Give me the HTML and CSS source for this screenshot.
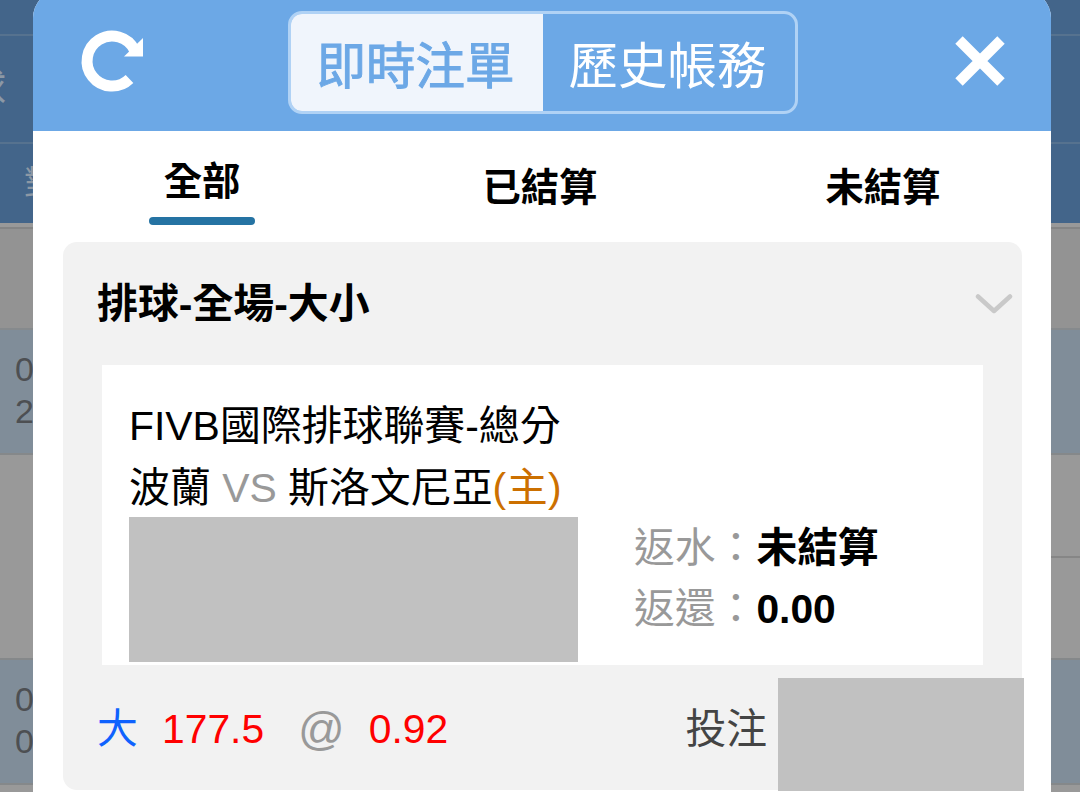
FILE: index.html
```
<!DOCTYPE html>
<html lang="zh-Hant">
<head>
  <meta charset="UTF-8">
  <title>即時注單</title>
  <link rel="stylesheet" href="styles.css">
</head>
<body>
<div class="page">
  <div class="row head head-top"></div>
  <div class="row head head-main"><span class="sport">球</span></div>
  <div class="row head head-sub"><span class="match">對</span></div>
  <div class="row strip"></div>
  <div class="row first"></div>
  <div class="row blue"><span class="score">0<br>2</span></div>
  <div class="row gray"><div class="split"></div></div>
  <div class="row blue"><span class="score">0<br>0</span></div>
  <div class="row gray"></div>
</div>

<div class="modal">
  <div class="modal-header">
    <svg class="icon-refresh" viewBox="0 0 62 62">
      <path d="M47.500 49 A25 25 0 1 1 52.500 20" fill="none" stroke="#fff" stroke-width="11"/>
      <path d="M61 8 V26.500 H42 Z" fill="#fff"/>
    </svg>
    <div class="switch">
      <div class="switch-item on">即時注單</div>
      <div class="switch-item">歷史帳務</div>
    </div>
    <svg class="icon-close" viewBox="0 0 50 50">
      <path d="M4 4 L46 46 M46 4 L4 46" stroke="#fff" stroke-width="10.500"/>
    </svg>
  </div>

  <div class="tabs">
    <div class="tab active"><span>全部</span></div>
    <div class="tab">已結算</div>
    <div class="tab">未結算</div>
  </div>

  <div class="card">
    <div class="card-title">
      <span>排球-全場-大小</span>
      <svg class="icon-arrow" viewBox="0 0 38 22">
        <path d="M3 3.500 L19 18 L35 3.500" fill="none" stroke="#c9c9c9" stroke-width="4.500" stroke-linecap="round" stroke-linejoin="round"/>
      </svg>
    </div>
    <div class="bet">
      <div class="line">FIVB國際排球聯賽-總分</div>
      <div class="line">波蘭 <span class="vs">VS</span> 斯洛文尼亞<span class="home">(主)</span></div>
      <div class="bet-info">
        <div class="mask"></div>
        <div class="result">
          <div><span class="label">返水：</span><b>未結算</b></div>
          <div><span class="label">返還：</span><b>0.00</b></div>
        </div>
      </div>
    </div>
    <div class="card-footer">
      <span class="pick">大</span>
      <span class="num">177.5</span>
      <span class="at">@</span>
      <span class="num">0.92</span>
      <span class="stake">投注</span>
      <div class="mask mask-stake"></div>
    </div>
  </div>
</div>
</body>
</html>
```

FILE: styles.css
```
* {
  box-sizing: border-box;
}
body {
  margin: 0;
  height: 792px;
  overflow: hidden;
  font-family: "Liberation Sans", "Noto Sans CJK TC", sans-serif;
  color: #000;
}

/* dimmed page behind */
.page {
  height: 792px;
  overflow: hidden;
  background: #999;
}
.row {
  overflow: hidden;
  color: #4d4f52;
}
.head {
  background: #43658a;
  color: #8c98a5;
}
.head-top {
  height: 36px;
  border-bottom: 2px solid #56728f;
}
.head-main {
  height: 108px;
  border-bottom: 2px solid #56728f;
}
.head-sub {
  height: 79px;
}
.sport {
  display: block;
  margin: 29px 0 0 -34px;
  font-size: 40px;
  line-height: 46px;
}
.match {
  display: block;
  margin: 16px 0 0 24px;
  font-size: 34px;
  line-height: 46px;
}
.strip {
  height: 6px;
  background: #999;
  border-bottom: 2px solid #858585;
}
.first {
  height: 101px;
  background: #939393;
  border-bottom: 2px solid #868a8d;
}
.blue {
  height: 125px;
  padding-top: 18px;
  background: #808d99;
  border-bottom: 2px solid #85888a;
}
.gray {
  height: 205px;
  border-bottom: 2px solid #85888a;
}
.split {
  width: 60px;
  height: 103px;
  margin-left: auto;
  border-bottom: 2px solid #868686;
}
.score {
  display: block;
  margin-left: 15px;
  font-size: 34px;
  line-height: 42px;
}

/* modal */
.modal {
  position: absolute;
  top: -10px;
  left: 33px;
  width: 1018px;
  height: 802px;
  overflow: hidden;
  background: #fff;
  border-radius: 28px 28px 0 0;
}
.modal-header {
  display: flex;
  align-items: flex-start;
  height: 141px;
  padding-top: 21px;
  background: #6ca8e6;
}
.icon-refresh {
  width: 62px;
  height: 62px;
  margin: 19px 0 0 49px;
  overflow: visible;
}
.switch {
  display: flex;
  width: 510px;
  height: 103px;
  margin-left: 144px;
  border: 3px solid #b0d2f5;
  border-radius: 14px;
  overflow: hidden;
}
.switch-item {
  width: 252px;
  padding-right: 3px;
  font-size: 49.500px;
  line-height: 105px;
  text-align: center;
  color: #fff;
}
.switch-item.on {
  background: #f0f5fc;
  color: #6ca8e6;
  -webkit-text-stroke: 1px #6ca8e6;
}
.icon-close {
  width: 50px;
  height: 50px;
  margin: 25px 0 0 157px;
}
.tabs {
  display: flex;
  height: 111px;
}
.tab {
  width: 338px;
  padding-top: 29px;
  font-size: 38.300px;
  line-height: 56px;
  text-align: center;
  font-weight: bold;
}
.tab:last-child {
  width: 342px;
  padding-left: 6px;
}
.tab.active {
  padding-top: 23px;
}
.tab.active span {
  display: block;
  width: 106px;
  margin: 0 auto;
}
.tab.active span::after {
  content: "";
  display: block;
  height: 8px;
  margin-top: 7px;
  border-radius: 4px;
  background: #2573a3;
}
.card {
  width: 959px;
  height: 548px;
  margin-left: 30px;
  background: #f2f2f2;
  border-radius: 14px;
}
.card-title {
  display: flex;
  align-items: center;
  justify-content: space-between;
  height: 123px;
  padding: 0 9px 0 34px;
  font-size: 40.900px;
  font-weight: bold;
}
.card-title span {
  padding-bottom: 6px;
}
.icon-arrow {
  width: 38px;
  height: 22px;
}
.bet {
  width: 881px;
  height: 300px;
  margin-left: 39px;
  padding: 31px 0 0 27px;
  background: #fff;
  font-size: 40.900px;
}
.line {
  height: 61px;
  line-height: 61px;
  white-space: nowrap;
}
.line + .line {
  height: 60px;
  line-height: 63px;
}
.vs, .label {
  color: #999;
}
.home {
  color: #cc7000;
  letter-spacing: 0.500px;
}
.bet-info {
  display: flex;
}
.mask {
  width: 449px;
  height: 145px;
  background: #c1c1c1;
}
.result {
  margin-left: 56px;
  padding-top: 1px;
  font-size: 40.800px;
  line-height: 61px;
}
.card-footer {
  display: flex;
  align-items: flex-start;
  height: 125px;
  padding: 13px 0 0 34px;
  font-size: 40.800px;
  line-height: 102px;
}
.pick {
  width: 65px;
  color: #0f62fe;
}
.num {
  color: #f00;
}
.at {
  margin: 0 24px 0 34px;
  font-size: 46px;
  color: #999;
}
.stake {
  margin-left: auto;
  line-height: 102px;
  color: #444;
}
.mask-stake {
  width: 246px;
  height: 113px;
  margin: 0 -2px 0 11px;
}
```
